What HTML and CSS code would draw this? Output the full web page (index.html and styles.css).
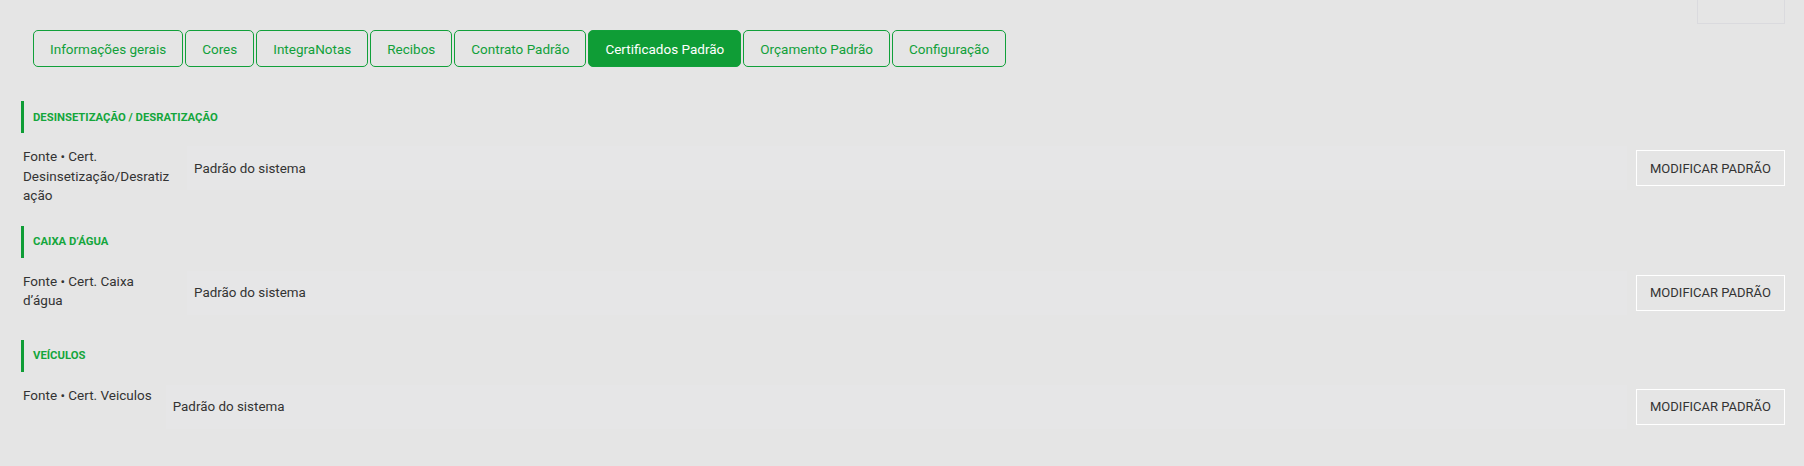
FILE: index.html
```html
<!DOCTYPE html>
<html lang="pt-BR">
<head>
<meta charset="utf-8">
<title>Certificados Padrão</title>
<link rel="stylesheet" href="styles.css">
</head>
<body>
<div class="page">
  <div class="topbar"><div class="topbox"></div></div>
  <nav class="tabs">
    <button class="tab">Informações gerais</button>
    <button class="tab">Cores</button>
    <button class="tab">IntegraNotas</button>
    <button class="tab">Recibos</button>
    <button class="tab">Contrato Padrão</button>
    <button class="tab active">Certificados Padrão</button>
    <button class="tab">Orçamento Padrão</button>
    <button class="tab">Configuração</button>
  </nav>

  <section class="section first">
    <div class="section-title">DESINSETIZAÇÃO / DESRATIZAÇÃO</div>
    <div class="row">
      <div class="label">Fonte • Cert. Desinsetização/Desratização</div>
      <div class="right">
        <div class="value">Padrão do sistema</div>
        <button class="btn">MODIFICAR PADRÃO</button>
      </div>
    </div>
  </section>

  <section class="section">
    <div class="section-title">CAIXA D’ÁGUA</div>
    <div class="row">
      <div class="label">Fonte • Cert. Caixa d’água</div>
      <div class="right">
        <div class="value">Padrão do sistema</div>
        <button class="btn">MODIFICAR PADRÃO</button>
      </div>
    </div>
  </section>

  <section class="section">
    <div class="section-title">VEÍCULOS</div>
    <div class="row">
      <div class="label">Fonte • Cert. Veiculos</div>
      <div class="right">
        <div class="value">Padrão do sistema</div>
        <button class="btn">MODIFICAR PADRÃO</button>
      </div>
    </div>
  </section>
</div>
</body>
</html>
```

FILE: styles.css
```css
* { box-sizing: border-box; }
html, body {
  margin: 0;
  padding: 0;
  background: #e5e5e5;
  font-family: Roboto, "Liberation Sans", sans-serif;
  color: #333333;
}
.page {
  padding: 0 19px 0 21px;
}
.topbar {
  height: 24px;
  display: flex;
  justify-content: flex-end;
}
.topbox {
  width: 88px;
  height: 24px;
  border: 1px solid #dadade;
  border-top: none;
}
.tabs {
  display: flex;
  gap: 2px;
  margin: 6px 0 0 12px;
}
.tab {
  height: 37px;
  padding: 0 16px;
  border: 1px solid #11a03a;
  border-radius: 5px;
  background: transparent;
  color: #11a03a;
  font-family: inherit;
  font-size: 13.5px;
  cursor: pointer;
}
.tab.active {
  background: #0f9d36;
  color: #ffffff;
}
.section.first {
  margin-top: 34px;
}
.section-title {
  height: 32px;
  border-left: 3px solid #0f9d36;
  padding-left: 9px;
  display: flex;
  align-items: center;
  color: #14a63c;
  font-weight: 700;
  font-size: 11.3px;
}
.row {
  display: flex;
  align-items: flex-start;
  margin: 13px 0 20px 0;
  padding-left: 2px;
}
.label {
  flex: 0 1 auto;
  max-width: 150px;
  margin-top: 1px;
  font-size: 13.5px;
  line-height: 19.5px;
  overflow-wrap: anywhere;
}
.right {
  flex: 1;
  display: flex;
  align-items: center;
  margin-left: 14px;
  padding-bottom: 5px;
}
.value {
  flex: 1;
  height: 44px;
  display: flex;
  align-items: center;
  padding-left: 7px;
  background: #e6e6e7;
  font-size: 13.4px;
}
.btn {
  margin-left: 9px;
  height: 36px;
  width: 149px;
  border: 1px solid #ffffff;
  background: transparent;
  color: #333333;
  font-family: inherit;
  font-size: 13px;
  padding: 0;
  cursor: pointer;
}
```
